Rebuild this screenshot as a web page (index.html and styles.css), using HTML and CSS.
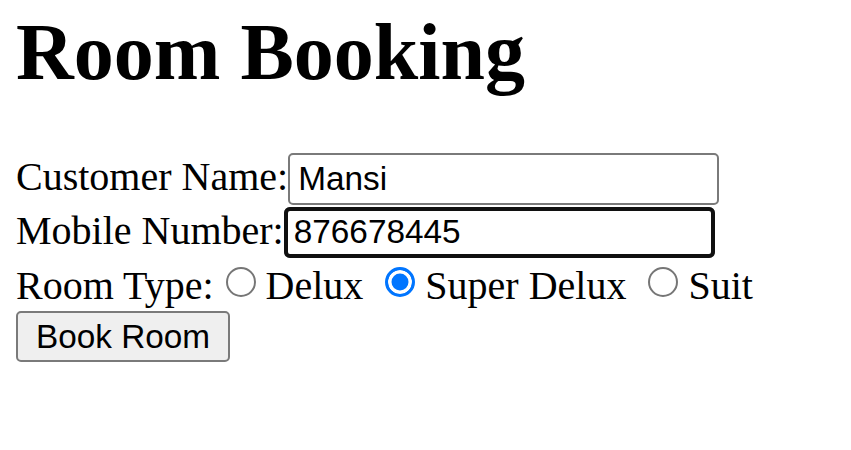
FILE: index.html
```html
<!DOCTYPE html>
<html>
<head>
<meta charset="utf-8">
<title>Room Booking</title>
<link rel="stylesheet" href="styles.css">
</head>
<body>
<h1 class="title">Room Booking</h1>
<form class="booking">
Customer Name:<input class="field" type="text" value="Mansi"><br>
Mobile Number:<input class="field field-focus" type="text" value="876678445"><br>
Room Type:<input class="radio" type="radio" name="room">Delux <input class="radio" type="radio" name="room" checked>Super Delux <input class="radio" type="radio" name="room">Suit<br>
<button class="btn" type="button">Book Room</button>
</form>
</body>
</html>
```

FILE: styles.css
```css
html, body {
  margin: 0;
  background: #ffffff;
}
body {
  padding: 7px 16px;
  font-family: "Liberation Serif", "Times New Roman", serif;
  font-size: 40px;
  color: #000000;
}
.title {
  margin: 0 0 54px 0;
  font-size: 80px;
  font-weight: bold;
  line-height: normal;
}
.booking {
  margin: 0;
}
.field {
  box-sizing: border-box;
  width: 431px;
  height: 51.5px;
  margin: 1px 0;
  padding: 0 8px;
  border: 2px solid #7a7a7a;
  border-radius: 5px;
  background: #ffffff;
  font-family: "Liberation Sans", Arial, sans-serif;
  font-size: 33.33px;
  color: #000000;
  vertical-align: baseline;
}
.field-focus {
  outline: 4px solid #101010;
  outline-offset: -4px;
  border-radius: 6px;
}
.radio {
  -webkit-appearance: none;
  appearance: none;
  box-sizing: border-box;
  width: 30px;
  height: 30px;
  margin: 8px 10px 1.5px 12px;
  padding: 0;
  border: 2.5px solid #767676;
  border-radius: 50%;
  background: #ffffff;
  vertical-align: baseline;
}
.radio:checked {
  border: 3px solid #0075ff;
  background: #0075ff;
  box-shadow: inset 0 0 0 3.5px #ffffff;
}
.btn {
  box-sizing: border-box;
  height: 51px;
  margin: 2.5px 0;
  padding: 0 18px;
  border: 2px solid #7a7a7a;
  border-radius: 5px;
  background: #efefef;
  font-family: "Liberation Sans", Arial, sans-serif;
  font-size: 33.33px;
  color: #000000;
  vertical-align: baseline;
}
```
